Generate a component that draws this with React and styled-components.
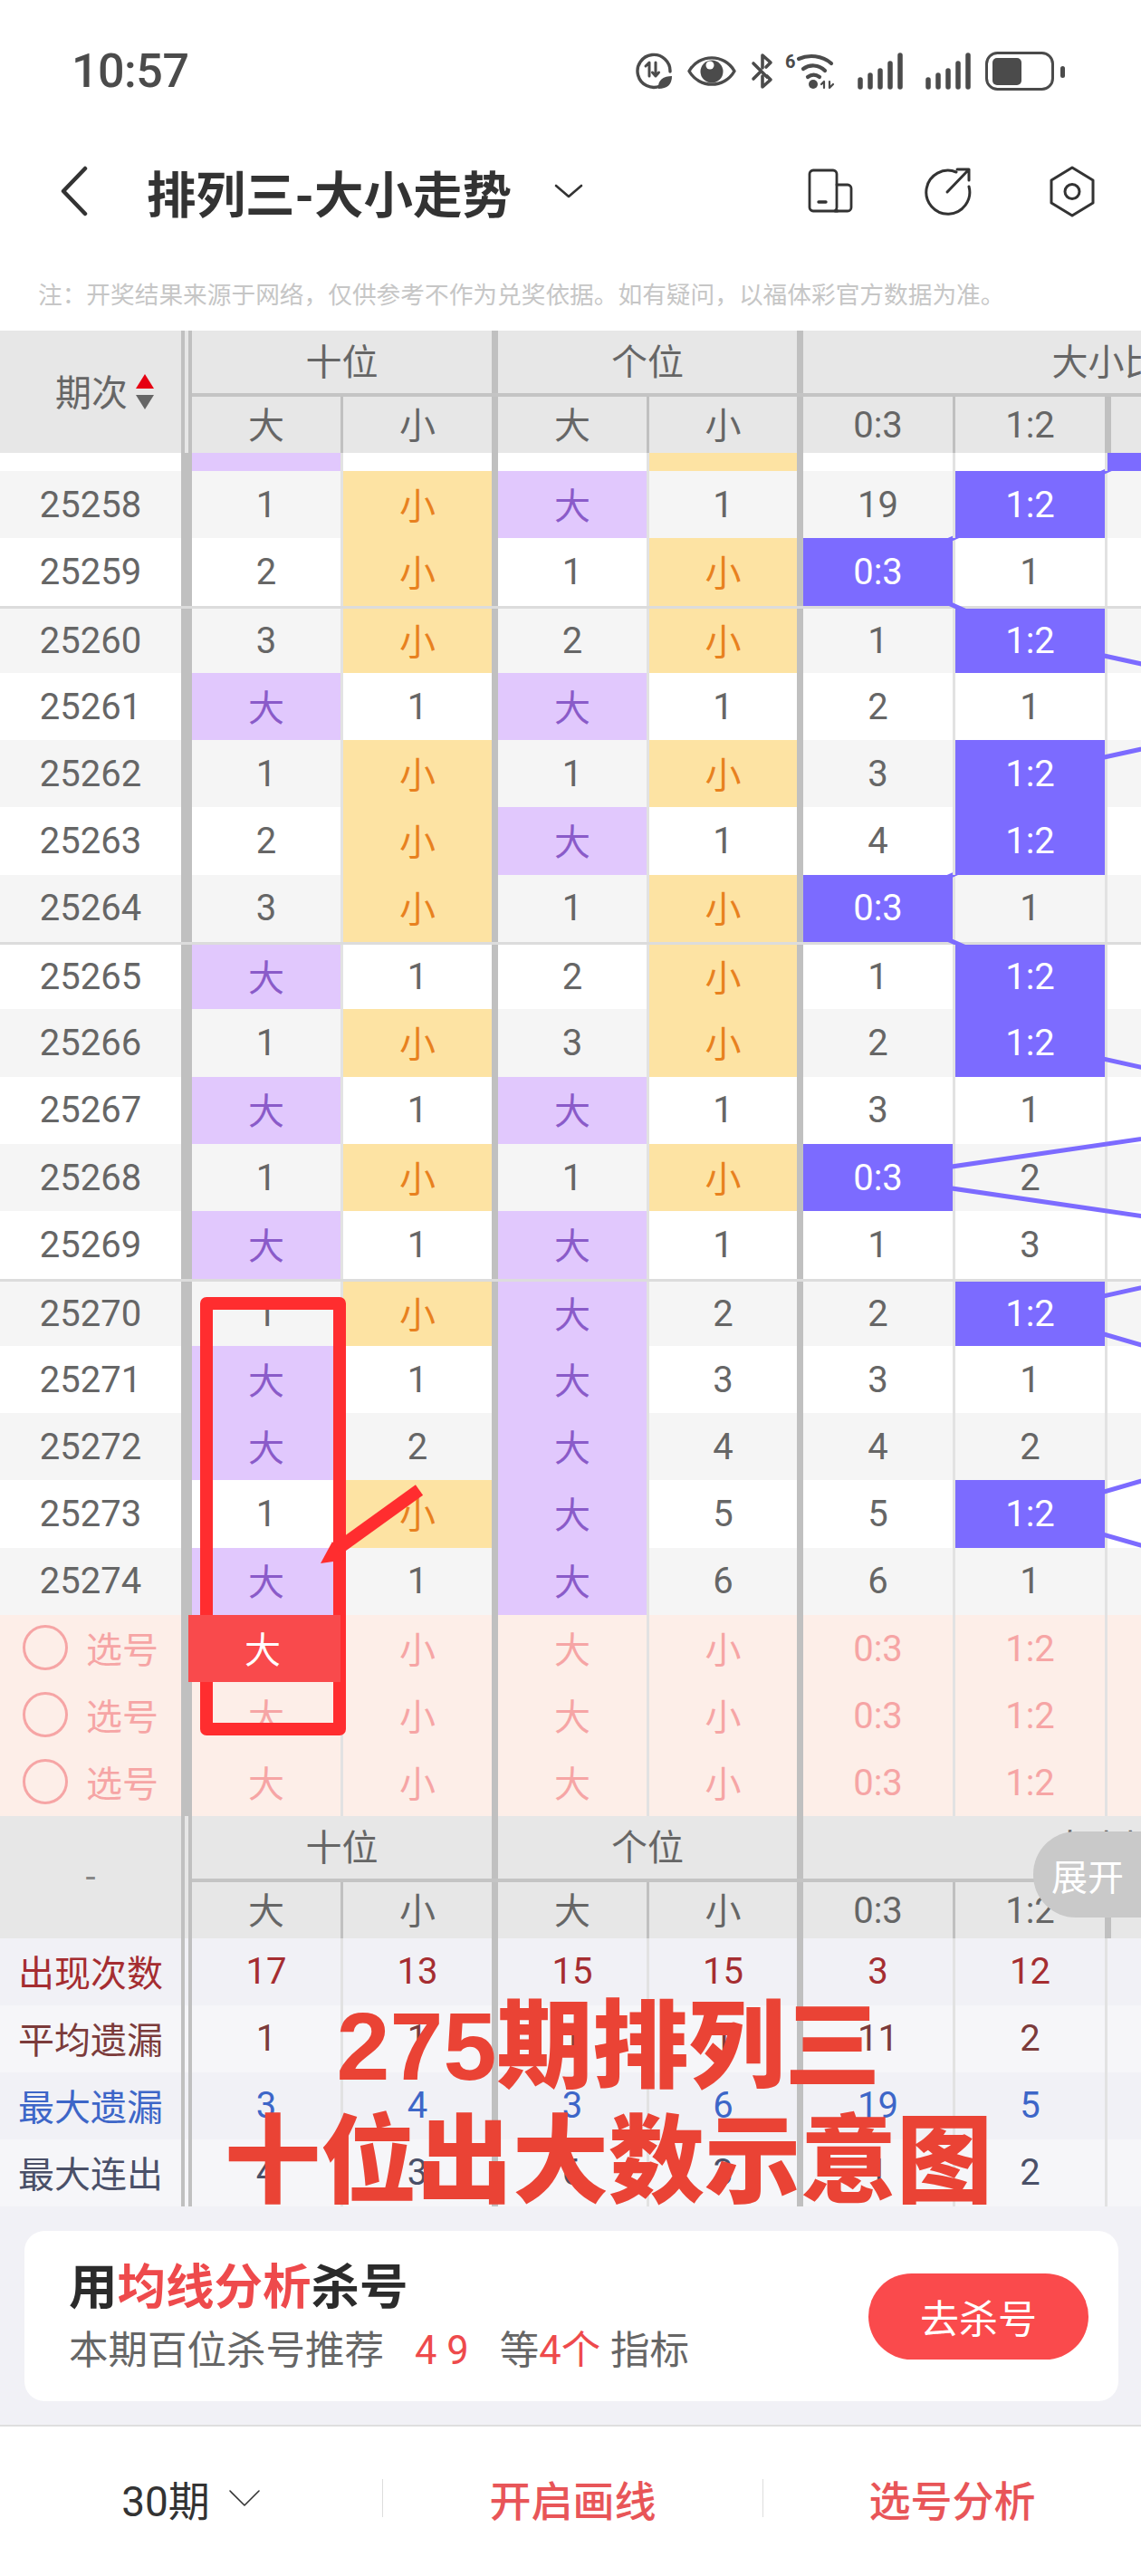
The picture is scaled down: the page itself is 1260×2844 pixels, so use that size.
import React from "react";
import styled, { createGlobalStyle } from "styled-components";

const GlobalStyle = createGlobalStyle`
  html, body { margin: 0; padding: 0; background: #fff; }
  body { font-family: Roboto, "Noto Sans CJK SC", sans-serif; }
`;

const COLS = "212px 164px 167px 171px 166px 172px 168px 168px";
const INK = "#4b4b4b";
const HIT = "#7c6bff";

// the note uses full-width colon and commas
const NOTE = "注\uFF1A开奖结果来源于网络\uFF0C仅供参考不作为兑奖依据。如有疑问\uFF0C以福体彩官方数据为准。";

// one entry per row: period, then the six visible columns
const ROWS = [
  ["25258", "1", "小", "大", "1", "19", "1:2"],
  ["25259", "2", "小", "1", "小", "0:3", "1"],
  ["25260", "3", "小", "2", "小", "1", "1:2"],
  ["25261", "大", "1", "大", "1", "2", "1"],
  ["25262", "1", "小", "1", "小", "3", "1:2"],
  ["25263", "2", "小", "大", "1", "4", "1:2"],
  ["25264", "3", "小", "1", "小", "0:3", "1"],
  ["25265", "大", "1", "2", "小", "1", "1:2"],
  ["25266", "1", "小", "3", "小", "2", "1:2"],
  ["25267", "大", "1", "大", "1", "3", "1"],
  ["25268", "1", "小", "1", "小", "0:3", "2"],
  ["25269", "大", "1", "大", "1", "1", "3"],
  ["25270", "1", "小", "大", "2", "2", "1:2"],
  ["25271", "大", "1", "大", "3", "3", "1"],
  ["25272", "大", "2", "大", "4", "4", "2"],
  ["25273", "1", "小", "大", "5", "5", "1:2"],
  ["25274", "大", "1", "大", "6", "6", "1"],
];

const STATS = [
  { label: "出现次数", color: "#a52d31", bg: "#f1f1f6", values: ["17", "13", "15", "15", "3", "12"] },
  { label: "平均遗漏", color: "#7b3b3b", bg: "#f6f6f9", values: ["1", "1", "1", "1", "11", "2"] },
  { label: "最大遗漏", color: "#3d66c8", bg: "#f1f1f6", values: ["3", "4", "3", "6", "19", "5"] },
  { label: "最大连出", color: "#4a5068", bg: "#f6f6f9", values: ["4", "3", "6", "3", "1", "2"] },
];

// trend line through the hit cells, measured from the first full row
const TREND = "1306,-37 1137,37 969,111 1137,186 1475,260 1137,334 1137,408 969,483 1137,557 1137,631 1475,706 969,780 1475,854 1137,929 1390,1003 1390,1077 1137,1151 1400,1226";

const dividerOf = (i) => (i === 0 ? "none" : i % 2 === 0 ? "major" : "minor");

const Page = styled.div`
  position: relative;
  width: 1260px;
  height: 2844px;
  overflow: hidden;
  background: #fff;
`;

const StatusBar = styled.div`
  display: flex;
  align-items: center;
  height: 156px;
  padding: 0 84px 0 79px;
  box-sizing: border-box;
`;

const Time = styled.div`
  font-size: 52px;
  color: ${INK};
  font-weight: 500;
  letter-spacing: -0.5px;
`;

const StatusIcons = styled.div`
  display: flex;
  align-items: center;
  margin-left: auto;
`;

const StatusSvg = styled.svg`
  display: block;
  margin-left: ${(p) => p.$gap || 0}px;
  fill: none;
  stroke: ${INK};
  stroke-linecap: round;
  stroke-linejoin: round;
`;

const Nav = styled.div`
  display: flex;
  align-items: center;
  height: 110px;
  padding-left: 67px;
`;

const Title = styled.div`
  margin-left: 65px;
  font-size: 54.5px;
  font-weight: 700;
  color: #333;
  white-space: nowrap;
`;

const NavSvg = styled.svg`
  display: block;
  fill: none;
  stroke: #333;
  stroke-linecap: round;
  stroke-linejoin: round;
  margin-left: ${(p) => p.$gap || 0}px;
`;

const Note = styled.div`
  height: 99px;
  padding: 42px 0 0 42px;
  box-sizing: border-box;
  font-size: 26.7px;
  line-height: 36px;
  color: #c6c6c6;
  white-space: nowrap;
`;

const HeadBlock = styled.div`
  display: grid;
  grid-template-columns: 212px 1fr;
  height: 135px;
  background: #e7e7e7;
  color: #666;
  font-size: 40px;
`;

const HeadLeft = styled.div`
  display: flex;
  align-items: center;
  justify-content: center;
  gap: 9px;
  padding-left: ${(p) => p.$shift || 0}px;
  border-right: 12px double #c0c0c0;
`;

const HeadRight = styled.div`
  display: flex;
  flex-direction: column;
  min-width: 0;
`;

const GroupRow = styled.div`
  display: grid;
  grid-template-columns: 331px 337px 676px;
  height: 69px;
  border-bottom: 4px solid #c4c4c4;
`;

const GroupCell = styled.div`
  display: flex;
  align-items: center;
  justify-content: center;
  box-sizing: border-box;
  padding-bottom: 6px;
  border-left: ${(p) => (p.$first ? "none" : "7px solid #c0c0c0")};
`;

const SubRow = styled.div`
  display: grid;
  grid-template-columns: 164px 167px 171px 166px 172px 168px 168px;
  flex: 1;
`;

const Cell = styled.div`
  display: flex;
  align-items: center;
  justify-content: center;
  box-sizing: border-box;
  min-width: 0;
  padding-bottom: ${(p) => p.$lift || 0}px;
  font-size: 40px;
  color: ${(p) => p.$color || "#666"};
  background: ${(p) => p.$bg || "transparent"};
  border-left: ${(p) =>
    p.$divider === "major"
      ? "7px solid #c0c0c0"
      : p.$divider === "minor"
        ? `3px solid ${p.$soft ? "#e2e2e2" : "#c0c0c0"}`
        : "none"};
  ${(p) => p.$raised && "position: relative; z-index: 2;"}
`;

const PickedCell = styled(Cell)`
  margin-left: -4px;
  padding-right: 4px;
`;

const Body = styled.div`
  position: relative;
  isolation: isolate;
`;

const TrendLines = styled.svg`
  position: absolute;
  left: 0;
  top: 0;
  z-index: 1;
  overflow: hidden;
`;

const Row = styled.div`
  display: grid;
  grid-template-columns: ${COLS};
  box-sizing: border-box;
  height: ${(p) => p.$height || "74.3px"};
  background: ${(p) => p.$bg || "#fff"};
  border-top: ${(p) => (p.$rule ? "3px solid #dcdcdc" : "none")};
`;

const Period = styled.div`
  display: flex;
  align-items: center;
  justify-content: center;
  gap: 20px;
  padding-bottom: ${(p) => p.$lift || 0}px;
  box-sizing: border-box;
  border-right: 12px solid #c0c0c0;
  font-size: 40px;
  color: ${(p) => p.$color || "#666"};
  white-space: nowrap;
`;

const Radio = styled.span`
  display: block;
  width: 44px;
  height: 44px;
  border: 3px solid #f6a5a5;
  border-radius: 50%;
`;

const SortStack = styled.div`
  display: flex;
  flex-direction: column;
  gap: 7px;
`;

const SortArrow = styled.span`
  display: block;
  width: 0;
  height: 0;
  border-left: 10px solid transparent;
  border-right: 10px solid transparent;
  border-bottom: ${(p) => (p.$up ? "16px solid #e60012" : "none")};
  border-top: ${(p) => (p.$up ? "none" : "16px solid #666")};
`;

const HeadLabel = styled.span`
  margin-bottom: 4px;
`;

const Dash = styled.span`
  color: #888;
`;

const StatLabel = styled(Period)`
  border-right: 12px double #c0c0c0;
`;

const ExpandTab = styled.div`
  position: absolute;
  left: 1141px;
  top: 2022px;
  width: 119px;
  height: 95px;
  padding-left: 20px;
  box-sizing: border-box;
  display: flex;
  align-items: center;
  background: #c9c9c9;
  border-radius: 47px 0 0 47px;
  color: #fff;
  font-size: 40px;
  white-space: nowrap;
`;

const Promo = styled.div`
  background: #f1f1f6;
  padding: 27px 25px 26px 27px;
  border-bottom: 2px solid #dedede;
`;

const PromoCard = styled.div`
  display: flex;
  align-items: center;
  justify-content: space-between;
  height: 188px;
  padding: 0 33px 0 49px;
  box-sizing: border-box;
  background: #fff;
  border-radius: 22px;
`;

const PromoTitle = styled.div`
  font-size: 53.5px;
  line-height: 70px;
  font-weight: 700;
  color: #2b2b2b;
`;

const Red = styled.span`
  color: #ee4a4c;
`;

const Picks = styled(Red)`
  margin: 0 34px;
`;

const PromoSub = styled.div`
  margin-top: 7px;
  font-size: 43.5px;
  line-height: 56px;
  color: #666;
  white-space: pre;
`;

const GoButton = styled.div`
  display: flex;
  align-items: center;
  justify-content: center;
  width: 243px;
  height: 95px;
  border-radius: 48px;
  background: #fa4a4c;
  color: #fff;
  font-size: 43px;
`;

const Footer = styled.div`
  display: grid;
  grid-template-columns: 422px 420px 418px;
  align-items: center;
  height: 166px;
  padding-bottom: 8px;
  box-sizing: border-box;
`;

const FootItem = styled.div`
  display: flex;
  align-items: center;
  justify-content: center;
  gap: 20px;
  height: 42px;
  font-size: 46px;
  font-weight: ${(p) => (p.$accent ? 500 : 400)};
  color: ${(p) => (p.$accent ? "#e85558" : "#333")};
  border-left: ${(p) => (p.$first ? "none" : "1px solid #ddd")};
`;

const RedFrame = styled.div`
  position: absolute;
  left: 221px;
  top: 1432px;
  width: 161px;
  height: 484px;
  box-sizing: border-box;
  border: 14px solid #ff2d2f;
  border-radius: 7px;
`;

const ArrowMark = styled.svg`
  position: absolute;
  left: 340px;
  top: 1630px;
`;

const Caption = styled.div`
  position: absolute;
  left: 84px;
  top: 2196px;
  width: 1176px;
  text-align: center;
  font-size: 106px;
  line-height: 127px;
  font-weight: 900;
  color: #ea4335;
  white-space: nowrap;
`;

const CaptionDigits = styled.span`
  font-family: "Liberation Sans", sans-serif;
  font-weight: 700;
`;

function cellLook(text) {
  if (text === "大") return { $bg: "#e1c8fd", $color: "#8a5bc9", $lift: 3 };
  if (text === "小") return { $bg: "#fde3a3", $color: "#e8811f", $lift: 3 };
  if (text === "0:3" || text === "1:2") return { $bg: HIT, $color: "#fff", $raised: true };
  return {};
}

const isCjk = (text) => text === "大" || text === "小";

function StatusIconRow() {
  return (
    <StatusIcons>
      <StatusSvg width="41" height="41" viewBox="0 0 41 41" strokeWidth="3.4">
        <path d="M27 37 A18 18 0 1 1 38 21" />
        <path d="M11 15 L15 11 V26 M22 11 V26 M18.5 22 L22 26 L25.5 22" strokeWidth="3" />
        <path d="M25 40 C24 30 31 26 40 26 C40 35 35 40 25 40Z" fill={INK} stroke="none" />
      </StatusSvg>
      <StatusSvg $gap={16} width="54" height="37" viewBox="0 0 54 37" strokeWidth="3.4">
        <path d="M2 18.5 C13 -1 41 -1 52 18.5 C41 38 13 38 2 18.5Z" />
        <circle cx="27" cy="19" r="12.5" fill={INK} stroke="none" />
        <circle cx="25" cy="12" r="4.5" fill="#fff" stroke="none" />
      </StatusSvg>
      <StatusSvg $gap={16} width="25" height="41" viewBox="0 0 25 41" strokeWidth="3.6">
        <path d="M3 12 L18 27 M13 17 V3 L22 11 L17 16" />
        <path d="M3 29 L10 22 M13 26 V38 L22 30 L18 26" />
      </StatusSvg>
      <StatusSvg $gap={13} width="58" height="41" viewBox="0 0 58 41" strokeWidth="4.2">
        <text x="0" y="17" fontSize="20" fontWeight="700" fill={INK} stroke="none" fontFamily="Roboto, sans-serif">6</text>
        <path d="M15 7 C26 2 41 3 51 12" />
        <path d="M20 18 C27 13 37 13 44 20" />
        <path d="M25 27 C29 24 34 24 38 27" />
        <circle cx="31" cy="35" r="5" fill={INK} stroke="none" />
        <path d="M43 39 V32 M40 35 L43 32 M49 32 V39 L53 35" strokeWidth="2.2" />
      </StatusSvg>
      <StatusSvg $gap={22} width="50" height="41" viewBox="0 0 50 41" strokeWidth="5.5">
        <path d="M3 30 V38 M14 25 V38 M25 20 V38 M36 12 V38 M47 3 V38" />
      </StatusSvg>
      <StatusSvg $gap={25} width="50" height="41" viewBox="0 0 50 41" strokeWidth="5.5">
        <path d="M3 30 V38 M14 25 V38 M25 20 V38 M36 12 V38 M47 3 V38" />
      </StatusSvg>
      <StatusSvg $gap={16} width="88" height="43" viewBox="0 0 88 43" strokeWidth="3">
        <rect x="1.5" y="1.5" width="73" height="40" rx="12" />
        <rect x="8" y="7" width="32" height="30" rx="5" fill={INK} stroke="none" />
        <rect x="83" y="16" width="5" height="13" rx="2.5" fill={INK} stroke="none" />
      </StatusSvg>
    </StatusIcons>
  );
}

function NavBar() {
  return (
    <Nav>
      <NavSvg width="30" height="56" viewBox="0 0 30 56" strokeWidth="4.5">
        <path d="M27 3 L3 28 L27 53" />
      </NavSvg>
      <Title>排列三-大小走势</Title>
      <NavSvg $gap={47} width="32" height="16" viewBox="0 0 32 16" strokeWidth="2.6">
        <path d="M2 2 L16 14 L30 2" />
      </NavSvg>
      <NavSvg $gap={248} width="50" height="50" viewBox="0 0 50 50" strokeWidth="2.8">
        <path d="M33 47 H6 A4 4 0 0 1 2 43 V6 A4 4 0 0 1 6 2 H28 A4 4 0 0 1 32 6 V43 A4 4 0 0 1 28 47" />
        <path d="M32 18 H44 A4 4 0 0 1 48 22 V43 A4 4 0 0 1 44 47 H30" />
        <path d="M12 37 H20" strokeWidth="3.4" />
      </NavSvg>
      <NavSvg $gap={78} width="54" height="54" viewBox="0 0 54 54" strokeWidth="3">
        <path d="M36 6 A24 24 0 1 0 50 22" />
        <path d="M26 28 L50 3 M37 3 H50 V15" />
      </NavSvg>
      <NavSvg $gap={84} width="52" height="57" viewBox="0 0 52 57" strokeWidth="3">
        <path d="M26 2 L49 16 V41 L26 55 L3 41 V16Z" />
        <circle cx="26" cy="28.5" r="8" />
      </NavSvg>
    </Nav>
  );
}

function TableHead({ left, shift }) {
  return (
    <HeadBlock>
      <HeadLeft $shift={shift}>{left}</HeadLeft>
      <HeadRight>
        <GroupRow>
          <GroupCell $first>十位</GroupCell>
          <GroupCell>个位</GroupCell>
          <GroupCell>大小比</GroupCell>
        </GroupRow>
        <SubRow>
          {["大", "小", "大", "小", "0:3", "1:2", ""].map((text, i) => (
            <Cell key={i} $divider={dividerOf(i)} $lift={isCjk(text) ? 4 : 0}>{text}</Cell>
          ))}
        </SubRow>
      </HeadRight>
    </HeadBlock>
  );
}

function TrendTable() {
  return (
    <Body>
      <TrendLines width="1260" height="1283" viewBox="0 -20 1260 1283">
        <polyline points={TREND} fill="none" stroke={HIT} strokeWidth="5" />
      </TrendLines>
      <Row $height="20px">
        <Period />
        <Cell $bg="#e1c8fd" />
        <Cell $divider="minor" $soft />
        <Cell $divider="major" />
        <Cell $divider="minor" $soft $bg="#fde3a3" />
        <Cell $divider="major" />
        <Cell $divider="minor" $soft />
        <Cell $divider="minor" $soft $bg={HIT} $raised />
      </Row>
      {ROWS.map((row, r) => (
        <Row key={row[0]} $bg={r % 2 === 0 ? "#f5f5f5" : "#fff"} $rule={r % 5 === 2}>
          <Period>{row[0]}</Period>
          {row.slice(1).map((text, i) => (
            <Cell key={i} $divider={dividerOf(i)} $soft {...cellLook(text)}>{text}</Cell>
          ))}
          <Cell $divider="minor" $soft />
        </Row>
      ))}
    </Body>
  );
}

function PickRows() {
  return [0, 1, 2].map((r) => (
    <Row key={r} $height="74px" $bg="#fdeee8">
      <Period $color="#f6a5a5" $lift={2}>
        <Radio />
        选号
      </Period>
      {["大", "小", "大", "小", "0:3", "1:2"].map((text, i) =>
        r === 0 && i === 0 ? (
          <PickedCell key={i} $bg="#f94a4c" $color="#fff" $raised $lift={3}>{text}</PickedCell>
        ) : (
          <Cell key={i} $divider={dividerOf(i)} $soft $color="#f6a5a5" $lift={isCjk(text) ? 3 : 0}>{text}</Cell>
        )
      )}
      <Cell $divider="minor" $soft />
    </Row>
  ));
}

function StatsRows() {
  return STATS.map((stat) => (
    <Row key={stat.label} $height="74px" $bg={stat.bg}>
      <StatLabel $color={stat.color} $lift={3}>{stat.label}</StatLabel>
      {stat.values.map((v, i) => (
        <Cell key={i} $divider={dividerOf(i)} $soft $color={stat.color} $lift={2}>{v}</Cell>
      ))}
      <Cell $divider="minor" $soft />
    </Row>
  ));
}

export default function App() {
  return (
    <Page>
      <GlobalStyle />
      <StatusBar>
        <Time>10:57</Time>
        <StatusIconRow />
      </StatusBar>
      <NavBar />
      <Note>{NOTE}</Note>

      <TableHead
        shift={31}
        left={
          <>
            <HeadLabel>期次</HeadLabel>
            <SortStack>
              <SortArrow $up />
              <SortArrow />
            </SortStack>
          </>
        }
      />
      <TrendTable />
      <PickRows />
      <TableHead left={<Dash>-</Dash>} />
      <StatsRows />

      <Promo>
        <PromoCard>
          <div>
            <PromoTitle>
              用<Red>均线分析</Red>杀号
            </PromoTitle>
            <PromoSub>
              本期百位杀号推荐<Picks>4 9</Picks>等<Red>4个</Red> 指标
            </PromoSub>
          </div>
          <GoButton>去杀号</GoButton>
        </PromoCard>
      </Promo>

      <Footer>
        <FootItem $first>
          30期
          <NavSvg width="36" height="20" viewBox="0 0 36 20" strokeWidth="1.6">
            <path d="M2 2 L18 18 L34 2" />
          </NavSvg>
        </FootItem>
        <FootItem $accent>开启画线</FootItem>
        <FootItem $accent>选号分析</FootItem>
      </Footer>

      <ExpandTab>展开</ExpandTab>
      <RedFrame />
      <ArrowMark width="130" height="100" viewBox="0 0 130 100">
        <path d="M123 15 L30 82" stroke="#ff2d2f" strokeWidth="14" fill="none" />
        <path d="M14 96 L27 72 L42 92Z" fill="#ff2d2f" />
      </ArrowMark>
      <Caption>
        <CaptionDigits>275</CaptionDigits>期排列三
        <br />
        十位出大数示意图
      </Caption>
    </Page>
  );
}
